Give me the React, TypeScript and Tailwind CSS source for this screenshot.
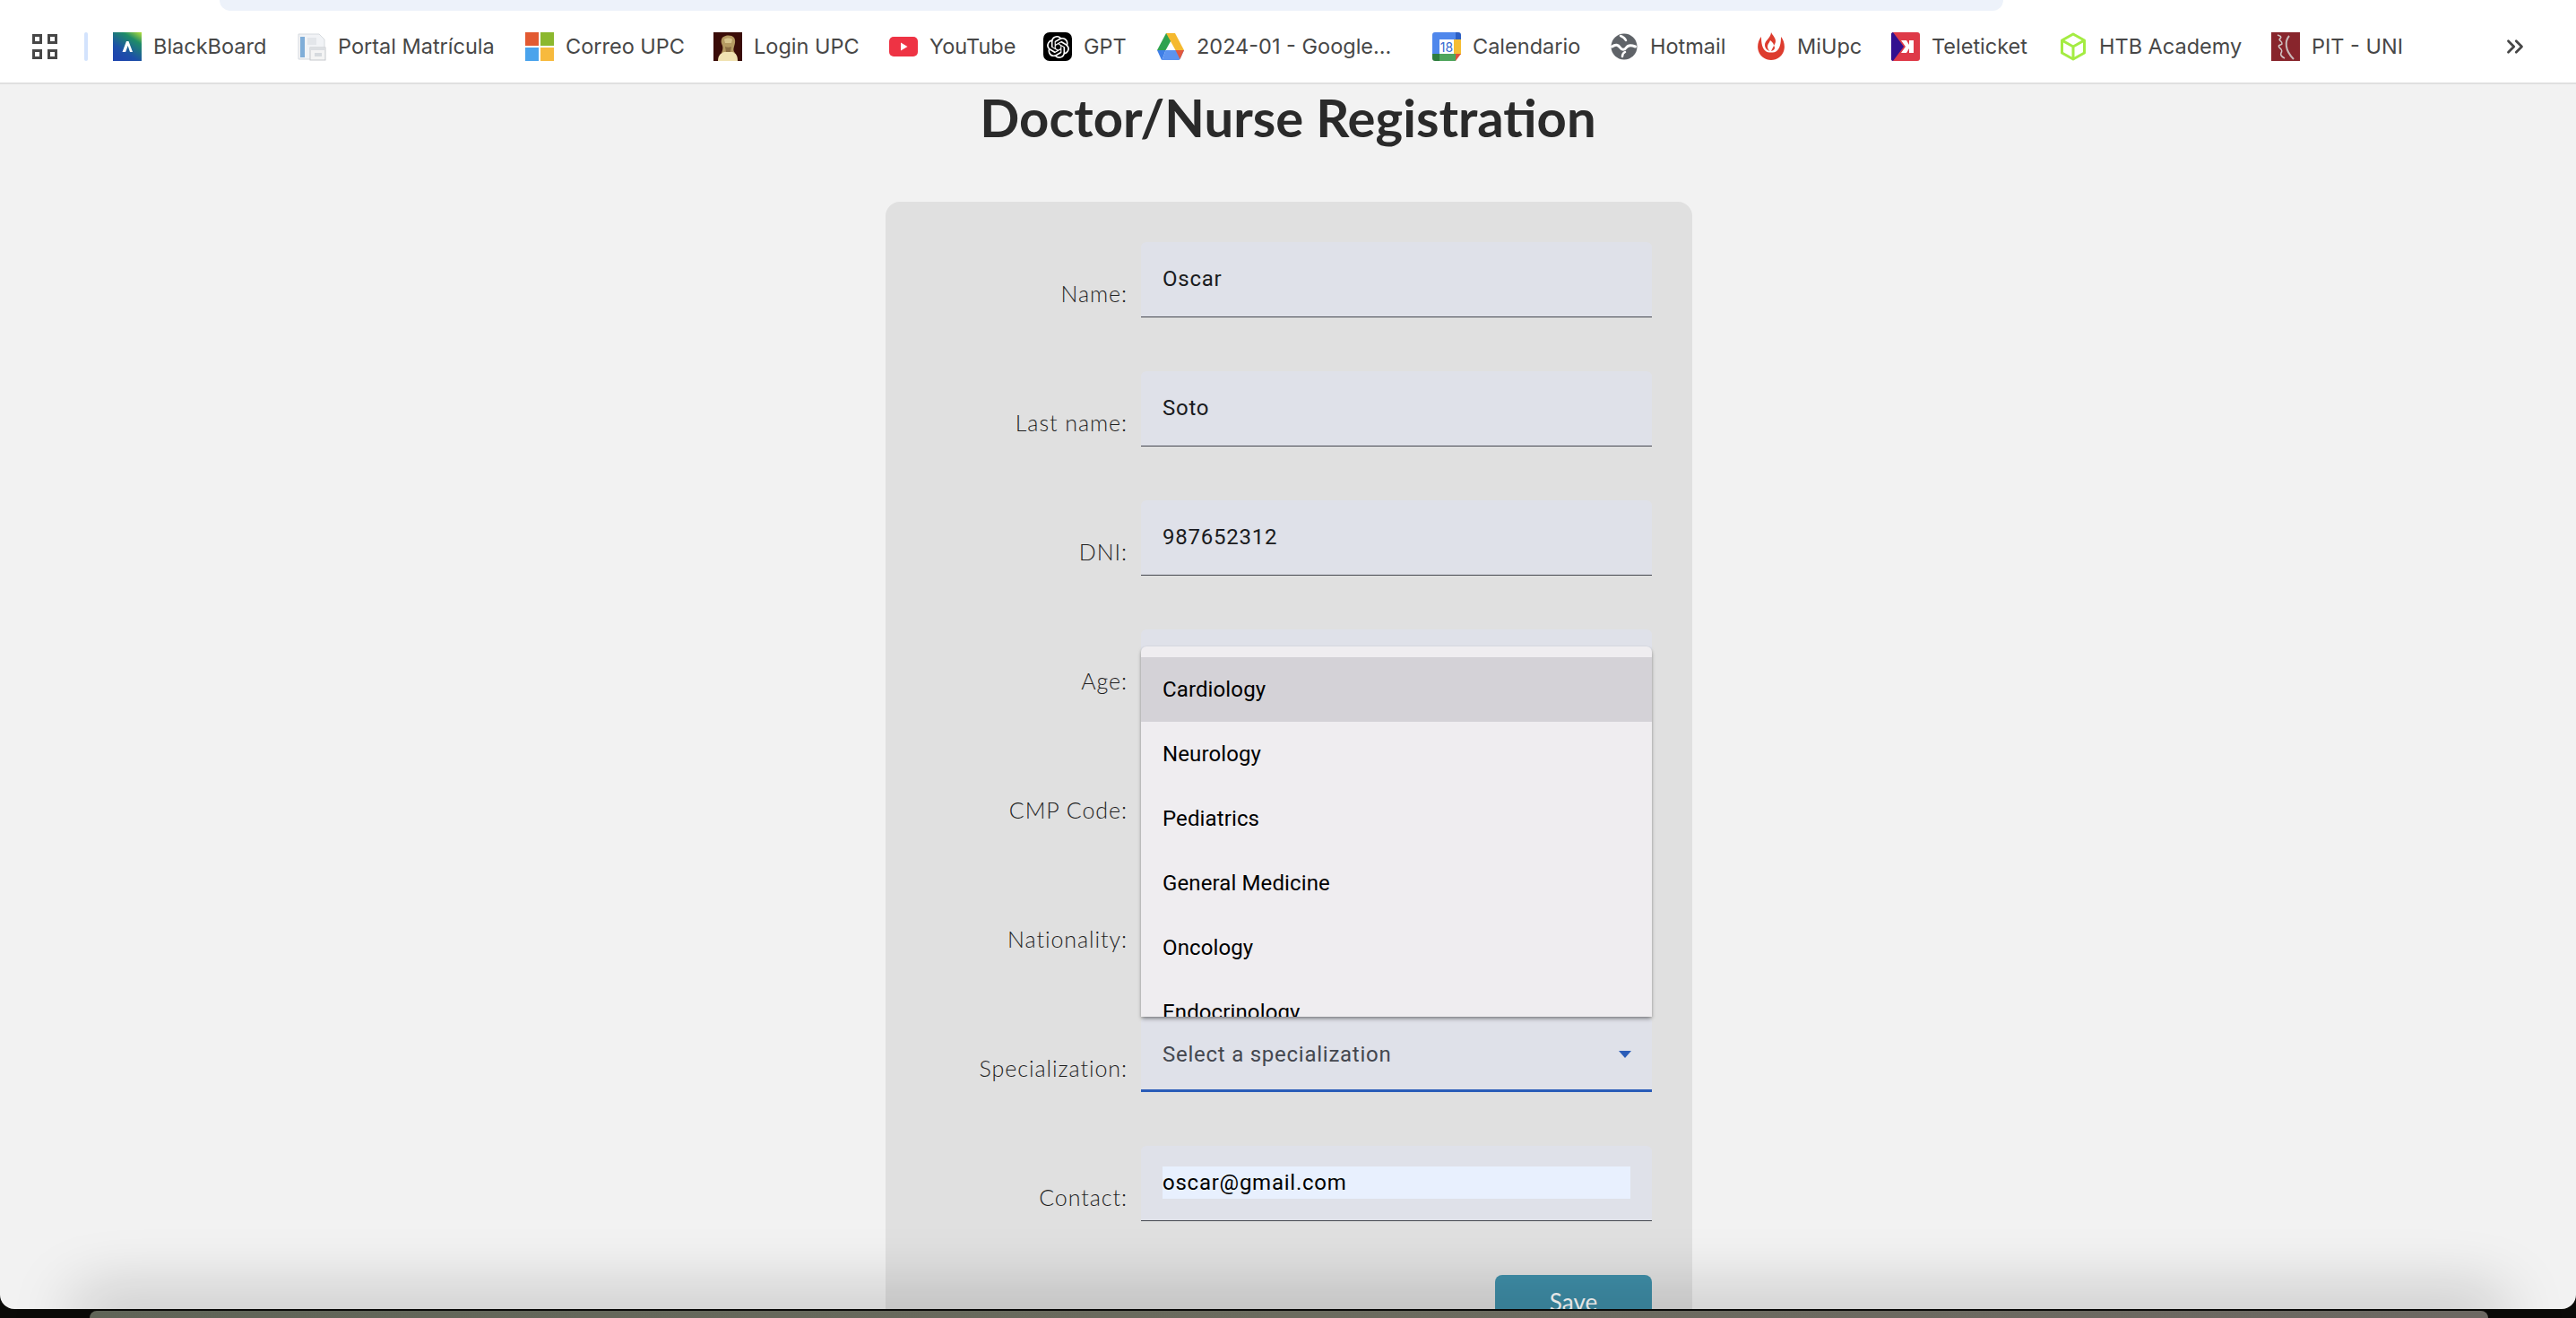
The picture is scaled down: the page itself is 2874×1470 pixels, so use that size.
import { ChevronsRight } from 'lucide-react'
import { SiOpenai } from 'react-icons/si'

const iconClass = 'h-8 w-8 shrink-0'

const BlackBoardIcon = () => (
  <svg viewBox="0 0 32 32" className={iconClass}>
    <defs>
      <linearGradient id="bb" x1="1" y1="0" x2="0.35" y2="1">
        <stop offset="0" stopColor="#b5e03a" />
        <stop offset="0.3" stopColor="#1f8c68" />
        <stop offset="0.75" stopColor="#1d50a8" />
        <stop offset="1" stopColor="#1e46ad" />
      </linearGradient>
    </defs>
    <rect width="32" height="32" fill="url(#bb)" />
    <path d="M10.5 22 15 10h2.5l4.5 12h-3l-2.3-7-2.6 7z" fill="#fff" />
  </svg>
)

const PortalIcon = () => (
  <svg viewBox="0 0 32 32" className={iconClass}>
    <path d="M1 2h23l6 6v22H1z" fill="#f1f3f6" stroke="#d6dade" />
    <rect x="3" y="5" width="5" height="23" fill="#7fadd8" />
    <rect x="11" y="6" width="10" height="8" fill="#e3e6ea" />
    <rect x="14" y="17" width="17" height="14" fill="#f4f4f4" stroke="#c5c8cc" />
    <rect x="14" y="17" width="17" height="3" fill="#dcdfe2" />
    <rect x="19" y="23" width="8" height="4" fill="#d6dade" />
  </svg>
)

const CorreoIcon = () => (
  <svg viewBox="0 0 32 32" className={iconClass}>
    <rect width="15" height="15" fill="#e25a32" />
    <rect x="17" width="15" height="15" fill="#8cb82e" />
    <rect y="17" width="15" height="15" fill="#4aa3ec" />
    <rect x="17" y="17" width="15" height="15" fill="#f7ba3d" />
  </svg>
)

const LoginIcon = () => (
  <svg viewBox="0 0 32 32" className={iconClass}>
    <rect width="32" height="32" fill="#3a0c08" />
    <path d="M9 8c1-5 11-6 14-2 2 3 1 7 0 10-1 3-1 5 1 7H9c1-3 2-5 1-8-1-2-2-5-1-7z" fill="#b59a62" />
    <path d="M12 8c2-2 7-2 9 0l-1 4h-7z" fill="#d8c48c" />
    <path d="M13 16c2 1 5 1 7 0l-1 6h-5z" fill="#8c6f45" />
    <path d="M5 32c0-6 3-9 7-10h9c4 1 6 4 6 10z" fill="#f0e2b2" />
  </svg>
)

const YouTubeIcon = () => (
  <svg viewBox="0 0 32 32" className={iconClass}>
    <rect y="5" width="32" height="22" rx="5" fill="#ee3344" />
    <path d="M13 11.5v9l7.5-4.5z" fill="#fff" />
  </svg>
)

const GptIcon = () => (
  <span className="flex h-8 w-8 shrink-0 items-center justify-center rounded-[7px] bg-black">
    <SiOpenai className="h-[25px] w-[25px] text-white" />
  </span>
)

const DriveIcon = () => (
  <svg viewBox="0 0 32 32" className={iconClass}>
    <path d="M11 1h10L10.5 20H1z" fill="#2fa24f" />
    <path d="M11 1h10l10 19h-9.5z" fill="#f5b92f" />
    <path d="M1 20h9.5l-4 11H6z" fill="#3f7fe8" />
    <path d="M10.5 20H31l-4.5 10a2 2 0 0 1-1.5 1H6.5z" fill="#5c93f0" />
    <path d="M21.5 20H31l-4.5 10z" fill="#e2583e" />
  </svg>
)

const CalendarIcon = () => (
  <svg viewBox="0 0 32 32" className={iconClass}>
    <rect width="32" height="32" rx="3" fill="#fff" />
    <path d="M3 0h23v8H8v17H0V3a3 3 0 0 1 3-3z" fill="#4f87ec" />
    <path d="M26 0h3a3 3 0 0 1 3 3v5h-6z" fill="#2c5fc4" />
    <rect x="24" y="8" width="8" height="17" fill="#f5bd33" />
    <path d="M8 24h18v8H8z" fill="#4fa55c" />
    <path d="M0 24h8v8H3a3 3 0 0 1-3-3z" fill="#2e7d3e" />
    <path d="M26 24h6l-6 8z" fill="#e0503d" />
    <text x="16" y="21.5" textAnchor="middle" fontSize="14" fontFamily="Inter, sans-serif" fill="#3468cf">18</text>
  </svg>
)

const HotmailIcon = () => (
  <svg viewBox="0 0 32 32" className={iconClass}>
    <circle cx="16" cy="16" r="14.5" fill="#5f6368" />
    <path d="M2.5 16c4-3 7-2 9 1s5 3 7 0 5-3 10-1" fill="none" stroke="#fff" strokeWidth="3" strokeLinecap="round" />
    <path d="M12 4c3 1 5 3 6 5" fill="none" stroke="#fff" strokeWidth="2.5" strokeLinecap="round" />
    <path d="M14 27c0-2 1-4 3-5" fill="none" stroke="#fff" strokeWidth="2.5" strokeLinecap="round" />
  </svg>
)

const UpcIcon = () => (
  <svg viewBox="0 0 32 32" className={iconClass}>
    <path d="M5 5C0 11-1 22 7 28c5 4 13 4 18 0 8-6 7-17 2-23 0 7-1 13-5 16-2 2-10 2-12 0-4-3-5-9-5-16z" fill="#dd3c2e" />
    <path d="M16 0c2 4 5 6 5 10 0 2-1 3-2 5 0-3-2-4-4-6-1 3-3 4-3 7 0 3 2 5 4 5-4 0-7-3-7-7 0-5 7-8 7-14z" fill="#dd3c2e" />
    <path d="M19 15c2 2 1 5-3 6 1-2 2-4 3-6z" fill="#dd3c2e" />
  </svg>
)

const TeleticketIcon = () => (
  <svg viewBox="0 0 32 32" className={iconClass}>
    <rect width="32" height="32" rx="3" fill="#de3a48" />
    <path d="M0 2c0-1 1-2 2-2l12 16L2 32c-1 0-2-1-2-2z" fill="#33108f" />
    <path d="M25 9v14h-5v-5l-3 5h-6l5-7-5-7h6l3 5V9z" fill="#fff" />
  </svg>
)

const HtbIcon = () => (
  <svg viewBox="0 0 32 32" className={iconClass} fill="none" stroke="#a4ec42" strokeWidth="3" strokeLinejoin="round">
    <path d="M16 2 28.5 9v14L16 30 3.5 23V9z" />
    <path d="M3.5 9 16 16l12.5-7M16 16v14" />
  </svg>
)

const PitIcon = () => (
  <svg viewBox="0 0 32 32" className={iconClass}>
    <rect width="32" height="32" fill="#88252c" />
    <path d="M20 4c-5 6-5 16 5 26" fill="none" stroke="#c8b9b9" strokeWidth="2" />
    <path d="M7 3c3 1 5 2 3 4-3 2 3 3 2 6-2 2-5 1-3 4 2 2 4 3 2 6-1 2 0 4 4 6" fill="none" stroke="#d0c4c4" strokeWidth="1.6" />
  </svg>
)

const bookmarks = [
  { label: 'BlackBoard', icon: <BlackBoardIcon />, width: 'w-[206px]' },
  { label: 'Portal Matrícula', icon: <PortalIcon />, width: 'w-[254px]' },
  { label: 'Correo UPC', icon: <CorreoIcon />, width: 'w-[210px]' },
  { label: 'Login UPC', icon: <LoginIcon />, width: 'w-[196px]' },
  { label: 'YouTube', icon: <YouTubeIcon />, width: 'w-[172px]' },
  { label: 'GPT', icon: <GptIcon />, width: 'w-[126px]' },
  { label: '2024-01 - Google...', icon: <DriveIcon />, width: 'w-[308px]' },
  { label: 'Calendario', icon: <CalendarIcon />, width: 'w-[198px]' },
  { label: 'Hotmail', icon: <HotmailIcon />, width: 'w-[164px]' },
  { label: 'MiUpc', icon: <UpcIcon />, width: 'w-[150px]' },
  { label: 'Teleticket', icon: <TeleticketIcon />, width: 'w-[187px]' },
  { label: 'HTB Academy', icon: <HtbIcon />, width: 'w-[237px]' },
  { label: 'PIT - UNI', icon: <PitIcon />, width: 'w-[170px]' },
]

const specializations = ['Cardiology', 'Neurology', 'Pediatrics', 'General Medicine', 'Oncology', 'Endocrinology']

const labelClass = 'self-end pb-[12px] text-right text-[25px] font-light leading-[30px] tracking-[0.95px] text-[#1f1f1f]'

function BookmarksBar() {
  return (
    <header className="relative h-[94px] shrink-0 border-b-2 border-[#e0e0e0] bg-white">
      <div className="absolute left-[245px] top-0 h-3 w-[1990px] rounded-b-[24px] bg-[#edf2fa]" />
      <div className="flex h-full items-center pb-[8px] pl-[36px] pt-[20px] font-['Inter',sans-serif] text-[23.5px] text-[#474747]">
        <svg viewBox="0 0 28 28" className="h-7 w-7 shrink-0" fill="none" stroke="#474747" strokeWidth="3">
          <rect x="1.5" y="1.5" width="8" height="8" />
          <rect x="18.5" y="1.5" width="8" height="8" />
          <rect x="1.5" y="18.5" width="8" height="8" />
          <rect x="18.5" y="18.5" width="8" height="8" />
        </svg>
        <div className="ml-[30px] mr-[28px] h-8 w-1 shrink-0 rounded-full bg-[#d3e3fd]" />
        <div className="flex items-center">
          {bookmarks.map((b) => (
            <div key={b.label} className={`flex shrink-0 items-center gap-[13px] whitespace-nowrap ${b.width}`}>
              {b.icon}
              <span>{b.label}</span>
            </div>
          ))}
        </div>
        <ChevronsRight className="absolute left-[2791px] top-[37px] h-[30px] w-[30px]" strokeWidth={2.2} color="#474747" />
      </div>
    </header>
  )
}

function Field({ label, value }: { label: string; value?: string }) {
  return (
    <>
      <label className={labelClass}>{label}</label>
      <div className="flex h-[84px] items-center rounded-t-[6px] border-b border-[#44474f] bg-[#dfe1e9] px-6 pb-[1px] font-['Roboto',sans-serif] text-[24px] tracking-[0.75px] text-[#1a1b20]">
        {value}
      </div>
    </>
  )
}

function RegistrationForm() {
  return (
    <div className="ml-[2px] mt-[59px] w-[900px] shrink-0 rounded-[16px] bg-[#e0e0e0] px-[45px] pt-[45px]">
      <div className="grid grid-cols-[225px_570px] gap-x-[15px] gap-y-[60px]">
        <Field label="Name:" value="Oscar" />
        <Field label="Last name:" value="Soto" />
        <Field label="DNI:" value="987652312" />
        <Field label="Age:" />
        <Field label="CMP Code:" />
        <Field label="Nationality:" />

        <label className={labelClass}>Specialization:</label>
        <div className="relative flex h-[84px] items-center justify-between rounded-t-[6px] border-b-[3px] border-[#2a5cb8] bg-[#dfe1e9] pl-6 pr-[23px] pt-[2px] font-['Roboto',sans-serif] text-[24px] tracking-[0.75px] text-[#44474f]">
          <span>Select a specialization</span>
          <span className="h-0 w-0 border-x-[7.5px] border-t-[8px] border-x-transparent border-t-[#2a5cb8]" />
          <ul className="absolute bottom-full left-0 h-[413px] w-full overflow-hidden rounded-t-[6px] bg-[#efedf0] pt-3 tracking-[0.12px] text-black shadow-[0_3px_5px_-1px_rgba(0,0,0,0.4),0_1px_3px_rgba(0,0,0,0.15)]">
            {specializations.map((s, i) => (
              <li key={s} className={`flex h-[72px] items-center px-6 ${i === 0 ? 'bg-[#d4d2d7]' : ''}`}>{s}</li>
            ))}
          </ul>
        </div>

        <label className={labelClass}>Contact:</label>
        <div className="flex h-[84px] items-center rounded-t-[6px] border-b border-[#44474f] bg-[#dfe1e9] px-6 pb-[1px] font-['Roboto',sans-serif] text-[24px] tracking-[0.75px] text-black">
          <span className="flex h-9 w-full items-center bg-[#e8f0fe]">oscar@gmail.com</span>
        </div>
      </div>
      <div className="mt-[60px] flex justify-end">
        <button className="h-[60px] w-[175px] rounded-[8px] bg-[#3f8ea8] text-[26px] text-white">Save</button>
      </div>
    </div>
  )
}

export default function App() {
  return (
    <div className="flex h-[1470px] w-[2874px] flex-col overflow-hidden bg-[#0a0a08]">
      <div className="flex h-[1460px] shrink-0 flex-col overflow-hidden rounded-b-[16px] bg-[#f2f2f2] font-['Lato',sans-serif]">
        <BookmarksBar />
        <main className="flex min-h-0 flex-1 flex-col items-center">
          <h1 className="mt-[2px] text-[58px] font-bold leading-[70px] text-[#2a2a2a]">Doctor/Nurse Registration</h1>
          <RegistrationForm />
        </main>
      </div>
      {/* window behind, its shadow falls on the page above */}
      <div className="relative z-10 ml-[100px] mr-[98px] mt-[2px] h-[8px] shrink-0 rounded-t-[14px] bg-gradient-to-r from-[#5f6457] via-[#6b6b5e] to-[#6c6862] shadow-[0_0_70px_20px_rgba(0,0,0,0.22)]" />
    </div>
  )
}
